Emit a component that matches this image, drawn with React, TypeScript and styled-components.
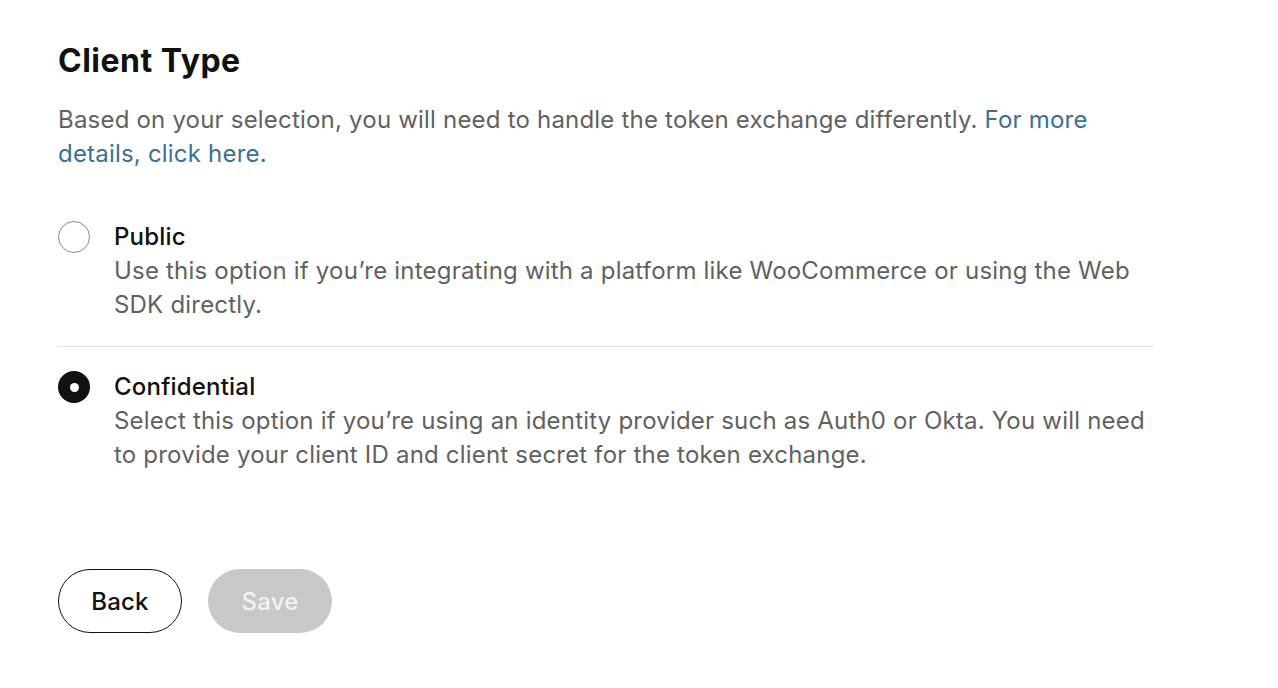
import { FunctionComponent, useState } from "react"
import styled, { createGlobalStyle } from "styled-components"

const GlobalStyle = createGlobalStyle`
  * { box-sizing: border-box; }
  body {
    margin: 0;
    background: #ffffff;
    font-family: Inter, "Noto Sans", "Liberation Sans", sans-serif;
    -webkit-font-smoothing: antialiased;
  }
`;

const Page = styled.div`
  width: 1096px;
  margin-left: 58px;
  padding-top: 41px;
`;

const Title = styled.h1`
  margin: 0;
  font-size: 32px;
  line-height: 40px;
  font-weight: 700;
  color: #111111;
  letter-spacing: 0.5px;
`;

const Intro = styled.p`
  margin: 22px 0 0;
  font-size: 24px;
  line-height: 34px;
  letter-spacing: 0.2px;
  color: #616161;
`;

const Link = styled.a`
  color: #3b7096;
  text-decoration: none;
`;

const Options = styled.div`
  margin-top: 49px;
  display: flex;
  flex-direction: column;
`;

const Option = styled.label<{ $divider?: boolean }>`
  display: flex;
  gap: 24px;
  align-items: flex-start;
  cursor: pointer;
  padding: ${({ $divider }) => ($divider ? "23px 0 0" : "0 0 24px")};
  border-top: ${({ $divider }) => ($divider ? "1px solid #e4e4e4" : "none")};
`;

const Radio = styled.span<{ $checked: boolean }>`
  flex: none;
  width: 32px;
  height: 32px;
  margin-top: 1px;
  border-radius: 50%;
  display: flex;
  align-items: center;
  justify-content: center;
  border: ${({ $checked }) => ($checked ? "none" : "1px solid #8a8a8a")};
  background: ${({ $checked }) => ($checked ? "#111111" : "#ffffff")};

  &::after {
    content: "";
    display: ${({ $checked }) => ($checked ? "block" : "none")};
    width: 9px;
    height: 9px;
    border-radius: 50%;
    background: #ffffff;
  }
`;

const OptionText = styled.div`
  display: flex;
  flex-direction: column;
  letter-spacing: 0.2px;
`;

const OptionTitle = styled.span`
  font-size: 24px;
  line-height: 34px;
  font-weight: 500;
  color: #111111;
`;

const OptionDesc = styled.span`
  font-size: 24px;
  line-height: 34px;
  color: #616161;
`;

const Actions = styled.div`
  margin-top: 97px;
  display: flex;
  gap: 26px;
`;

const Button = styled.button<{ $variant: "outline" | "disabled" }>`
  width: 124px;
  height: 64px;
  border-radius: 32px;
  font-family: inherit;
  font-size: 24px;
  font-weight: 500;
  letter-spacing: 0.2px;
  cursor: ${({ $variant }) => ($variant === "disabled" ? "default" : "pointer")};
  border: ${({ $variant }) => ($variant === "outline" ? "1px solid #111111" : "none")};
  background: ${({ $variant }) => ($variant === "outline" ? "#ffffff" : "#c8c8c8")};
  color: ${({ $variant }) => ($variant === "outline" ? "#111111" : "#f2f2f2")};
`;

const options = [
  {
    id: "public",
    title: "Public",
    description:
      "Use this option if you\u2019re integrating with a platform like WooCommerce or using the Web SDK directly.",
  },
  {
    id: "confidential",
    title: "Confidential",
    description:
      "Select this option if you\u2019re using an identity provider such as Auth0 or Okta. You will need to provide your client ID and client secret for the token exchange.",
  },
];

const App: FunctionComponent = () => {
  const [selected, setSelected] = useState("confidential");

  return (
    <>
      <GlobalStyle />
      <Page>
        <Title>Client Type</Title>
        <Intro>
          Based on your selection, you will need to handle the token exchange differently.{" "}
          <Link href="#">For more details, click here.</Link>
        </Intro>
        <Options>
          {options.map((opt, i) => (
            <Option key={opt.id} $divider={i > 0} onClick={() => setSelected(opt.id)}>
              <Radio $checked={selected === opt.id} />
              <OptionText>
                <OptionTitle>{opt.title}</OptionTitle>
                <OptionDesc>{opt.description}</OptionDesc>
              </OptionText>
            </Option>
          ))}
        </Options>
        <Actions>
          <Button $variant="outline">Back</Button>
          <Button $variant="disabled" disabled>
            Save
          </Button>
        </Actions>
      </Page>
    </>
  );
};

export default App;
